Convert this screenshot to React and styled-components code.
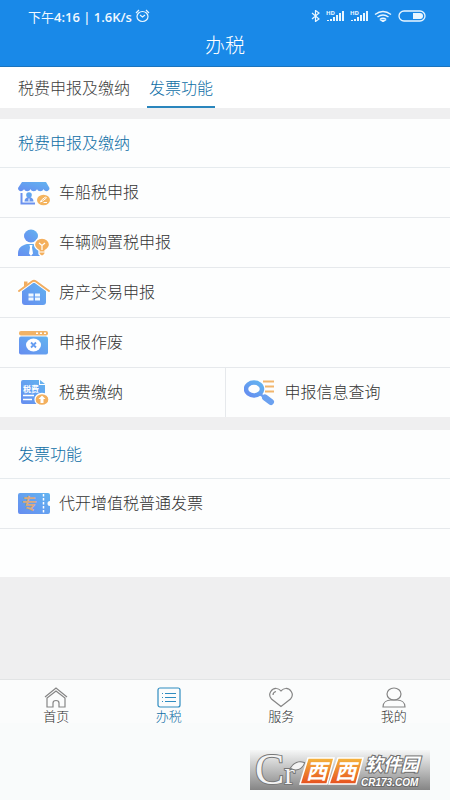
import React, { useState } from 'react';
import styled, { createGlobalStyle } from 'styled-components';

const GlobalStyle = createGlobalStyle`
  * {
    box-sizing: border-box;
  }
  body {
    margin: 0;
    background: #efeff0;
    font-family: 'Noto Sans CJK SC', sans-serif;
    font-weight: 300;
    color: #333;
  }
  button {
    font-family: inherit;
    font-weight: inherit;
    border: 0;
    background: none;
    padding: 0;
    cursor: pointer;
  }
  svg {
    display: block;
    flex-shrink: 0;
  }
`;

const Page = styled.div`
  min-height: 100vh;
  display: flex;
  flex-direction: column;
`;

const Header = styled.header`
  background: #1989e8;
  border-bottom: 1px solid #1b74bd;
  color: #fff;
`;
const StatusBar = styled.div`
  display: flex;
  justify-content: space-between;
  align-items: center;
  height: 32px;
  padding: 0 24px 0 28px;
`;
const StatusGroup = styled.div`
  display: flex;
  align-items: center;
  gap: ${props => props.$gap}px;
`;
const Clock = styled.span`
  font: 400 13px 'Noto Sans CJK SC', sans-serif;
  color: #f0f8ff;
  b {
    font-family: 'Open Sans', sans-serif;
    font-weight: 600;
  }
`;
const Title = styled.h1`
  margin: 0;
  height: 34px;
  font-size: 20px;
  line-height: 26px;
  font-weight: 300;
  text-align: center;
`;

const Tabs = styled.nav`
  display: flex;
  gap: 15px;
  padding: 0 16px;
  background: #fff;
`;
const Tab = styled.button`
  height: 41px;
  && {
    padding: 0 2px;
    border-bottom: 2px solid ${props => (props.$active ? '#2a86bd' : 'transparent')};
  }
  font-size: 16px;
  line-height: 36px;
  color: ${props => (props.$active ? '#0d6da5' : '#3c3c3c')};
`;

const Main = styled.main`
  flex: 1;
  display: flex;
  flex-direction: column;
  gap: 13px;
  padding-top: 11px;
`;
const Card = styled.section`
  padding-bottom: ${props => props.$space || 0}px;
  background: #fdfefe;
`;
const CardTitle = styled.h2`
  margin: 0;
  padding: 0 18px 1px;
  font-size: 16px;
  line-height: 47px;
  font-weight: 300;
  color: #0d6da5;
  border-bottom: 1px solid #e6ebee;
`;
const Row = styled.div`
  display: flex;
  border-bottom: ${props => (props.$last ? 0 : 1)}px solid #e6e9ec;
`;
const Item = styled.a`
  flex: 1;
  display: flex;
  align-items: center;
  gap: 9px;
  height: 49px;
  padding-left: 18px;
  font-size: 16px;
  color: #333;
  text-decoration: none;
  & + & {
    border-left: 1px solid #e6e9ec;
  }
`;
const ItemName = styled.span`
  padding-bottom: 4px;
`;

const BottomNav = styled.nav`
  display: flex;
  align-items: flex-start;
  padding-top: 7px;
  border-top: 1px solid #e2e4e5;
  background: #fbfcfc;
`;
const NavItem = styled.a`
  flex: 1;
  display: flex;
  flex-direction: column;
  align-items: center;
  font-size: 13px;
  line-height: 15px;
  color: ${props => (props.$active ? '#0d6da5' : '#2c2c2c')};
  text-decoration: none;
  svg {
    color: ${props => (props.$active ? '#2f8cc0' : '#858585')};
  }
`;
const Footer = styled.footer`
  display: flex;
  justify-content: flex-end;
  padding: 27px 20px 10px;
  background: #f9fbfb;
`;

const Gradients = () => (
  <svg width="0" height="0" style={{ position: 'absolute' }} aria-hidden="true">
    <defs>
      <linearGradient id="blue" x1="1" y1="0" x2="0" y2="1">
        <stop offset="0" stopColor="#62b4f0" />
        <stop offset="1" stopColor="#668df0" />
      </linearGradient>
    </defs>
  </svg>
);

const Icon = ({ children }) => (
  <svg width="32" height="32" viewBox="0 0 32 32" fill="none" aria-hidden="true">{children}</svg>
);

const ShopIcon = () => (
  <Icon>
    <path d="M4 5h24l3.500 6c0 4-5 4-6 1-1 3-5.500 3-6.500 0-1 3-5.500 3-6.500 0-1 3-5.500 3-6.500 0-1 3-6 3-6-1z" fill="url(#blue)" />
    <path d="M3.500 16v10.500H17" stroke="#6b91ee" strokeWidth="2" />
    <circle cx="11" cy="18" r="2.800" fill="#62a5ee" />
    <path d="M6.500 24.500c0-3 2-4.500 4.500-4.500s4.500 1.500 4.500 4.500z" fill="#6796ee" />
    <path d="M11 21.500v3" stroke="#fff" strokeWidth="1" />
    <ellipse cx="25.500" cy="23" rx="6.500" ry="5.300" fill="#f4b45f" />
    <path d="m22.500 25 1-2 4-3 1 1-4 3zM25.500 25.500H29" stroke="#fff" strokeWidth="1" />
  </Icon>
);

const PersonIcon = () => (
  <Icon>
    <ellipse cx="13" cy="9" rx="7" ry="6.500" fill="url(#blue)" />
    <path d="M0 29v-3c0-5 4-8 9-9h8c4 1 6 3 6 6v6z" fill="url(#blue)" />
    <path d="M11.500 18h3l-.5 2.500 1 6-2 2.500-2-2.500 1-6z" fill="#fff" />
    <path d="M21 27v-3.500c-2.500-1.500-4.500-3.500-4.500-6a7.500 6.500 0 0 1 15 0c0 2.500-2 4.500-4.500 6V27l-2 2h-2z" fill="#f4b05e" stroke="#fff" strokeWidth="1.300" />
    <path d="m21 16 3 2.500 3-2.500M24 18.500V23M21.500 25h5" stroke="#fff" strokeWidth="1.200" />
  </Icon>
);

const HouseIcon = () => (
  <Icon>
    <path d="M4 13 14 5.500q2-1.500 4 0L28 13v12a3 3 0 0 1-3 3H7a3 3 0 0 1-3-3z" fill="url(#blue)" />
    <path d="M1 14 14 4.500q2-1.500 4 0L31 14" stroke="#fff" strokeWidth="4" />
    <path d="M6 10V4.500h3.500V7z" fill="#f1ad60" />
    <path d="M1 14 14 4.500q2-1.500 4 0L31 14" stroke="#f1ad60" strokeWidth="2" strokeLinecap="round" />
    <path d="M10.500 16.500h5v3h-5zM17 16.500h5v3h-5zM10.500 20.500h5v3h-5zM17 20.500h5v3h-5z" fill="#f0f8ff" />
  </Icon>
);

const VoidIcon = () => (
  <Icon>
    <rect x="1" y="4" width="29" height="4.500" rx="2" fill="#f1b366" />
    <path d="M18 6.200h2M22 6.200h2M26 6.200h2" stroke="#fff" strokeWidth="1.500" />
    <rect x="1" y="9.500" width="29" height="18" rx="2" fill="url(#blue)" />
    <ellipse cx="15.500" cy="18" rx="7.500" ry="6.500" fill="#fff" />
    <path d="m13 15.500 5 5M18 15.500l-5 5" stroke="#659df0" strokeWidth="1.800" />
  </Icon>
);

const TaxIcon = () => (
  <Icon>
    <path d="M5 3h16v5h6v19H5a2 2 0 0 1-2-2V5a2 2 0 0 1 2-2z" fill="url(#blue)" />
    <path d="M22 3v4h5z" fill="#6bb2ee" />
    <text x="5" y="15" fontSize="8" fontWeight="700" fill="#fff">税费</text>
    <path d="M5 18.500h11M5 22.500h9" stroke="#fff" strokeWidth="1.300" />
    <ellipse cx="24" cy="22.500" rx="7" ry="6" fill="#f3b05e" stroke="#fff" strokeWidth="1.300" />
    <path d="m24 18.500 3.500 3.500h-2v4h-3v-4h-2z" fill="#fff" />
  </Icon>
);

const SearchIcon = () => (
  <Icon>
    <path d="M19 4.500h11M21 9.500h9M21 14.500h9" stroke="#f2b66c" strokeWidth="2" />
    <ellipse cx="10" cy="12" rx="8" ry="6.500" stroke="url(#blue)" strokeWidth="4.500" />
    <path d="m16 17 4 3" stroke="#6b9df0" strokeWidth="2.500" />
    <path d="m21 20.500 6 4.500" stroke="#6ba1f0" strokeWidth="6" strokeLinecap="round" />
  </Icon>
);

const TicketIcon = () => (
  <Icon>
    <path d="M2 5h28a2 2 0 0 1 2 2v6a2 2 0 0 0 0 5v6a2 2 0 0 1-2 2H2a2 2 0 0 1-2-2V7a2 2 0 0 1 2-2z" fill="url(#blue)" />
    <text x="4" y="21" fontSize="15" fontWeight="700" fill="#d9aa80">专</text>
    <path d="M25.500 6v19" stroke="#fff" strokeWidth="1.500" strokeDasharray="2.500 1.500" />
  </Icon>
);

const NavIcon = ({ children, d }) => (
  <svg width="24" height="21" viewBox="0 0 24 21" fill="none" stroke="currentColor" strokeWidth="1.200" aria-hidden="true">
    <path d={d} />
    {children}
  </svg>
);

const Signal = () => (
  <svg width="18" height="12" viewBox="0 0 18 12" fill="#e9f6ff" aria-hidden="true">
    <text x="0" y="5" fontSize="6" fontWeight="700" fontFamily="Open Sans">HD</text>
    <path d="M1 10h2v1H1zM4 9h2v2H4zM7 7h2v4H7zM10 5h2v6h-2zM13 3h2v8h-2zM16 1h2v10h-2z" />
  </svg>
);

const Alarm = () => (
  <svg width="15" height="14" viewBox="0 0 15 14" fill="none" stroke="#e9f6ff" strokeWidth="1.200" aria-hidden="true">
    <ellipse cx="7.500" cy="7.500" rx="5.500" ry="5" />
    <path d="m1 4 3-3M14 4l-3-3M5 6l2.500 2L10 6" />
  </svg>
);

const Brand = () => (
  <svg width="180" height="40" viewBox="0 0 180 40" overflow="visible" role="img" aria-label="西西软件园 CR173.COM">
    <defs>
      <linearGradient id="plate" x1="0" y1="0" x2="0" y2="1">
        <stop offset="0" stopColor="#f6f7f7" />
        <stop offset="1" stopColor="#858585" />
      </linearGradient>
      <linearGradient id="tile" x1="0" y1="0" x2="0" y2="1">
        <stop offset="0" stopColor="#f5b53d" />
        <stop offset="1" stopColor="#e6501f" />
      </linearGradient>
    </defs>
    <path d="M0 0h180v40H0z" fill="url(#plate)" />
    <g fill="#f4f4f4" stroke="#777" strokeWidth="2" paintOrder="stroke" fontFamily="Liberation Serif">
      <text x="5" y="34" fontSize="44">C<tspan fontSize="32">r</tspan></text>
      <path d="M41 18c3-5 8-7 13-5-2 6-8 8-13 5z" />
    </g>
    <path d="M58 8h26l-7 26H50zM88 8h25l-7 26H79z" fill="url(#tile)" stroke="#fff" strokeWidth="1.500" />
    <g fill="#fff" fontSize="21" fontWeight="700" fontStyle="italic">
      <text x="56" y="29">西</text>
      <text x="85" y="29">西</text>
    </g>
    <g fill="#fff" stroke="#6c6c6c" strokeWidth="2" paintOrder="stroke" fontWeight="700" fontStyle="italic">
      <text x="115" y="21" fontSize="18">软件园</text>
      <text x="111" y="36" fontSize="10" fontFamily="Liberation Sans">CR173.COM</text>
    </g>
  </svg>
);

const taxRows = [
  [{ name: '车船税申报', Glyph: ShopIcon }],
  [{ name: '车辆购置税申报', Glyph: PersonIcon }],
  [{ name: '房产交易申报', Glyph: HouseIcon }],
  [{ name: '申报作废', Glyph: VoidIcon }],
  [
    { name: '税费缴纳', Glyph: TaxIcon },
    { name: '申报信息查询', Glyph: SearchIcon },
  ],
];
const invoiceRows = [[{ name: '代开增值税普通发票', Glyph: TicketIcon }]];

const Section = ({ title, rows, space }) => (
  <Card $space={space}>
    <CardTitle>{title}</CardTitle>
    {rows.map((row, i) => (
      <Row key={row[0].name} $last={!space && i === rows.length - 1}>
        {row.map(({ name, Glyph }) => (
          <Item key={name} href="#">
            <Glyph />
            <ItemName>{name}</ItemName>
          </Item>
        ))}
      </Row>
    ))}
  </Card>
);

const tabs = ['税费申报及缴纳', '发票功能'];

const App = () => {
  const [tab, setTab] = useState(tabs[1]);
  return (
    <Page>
      <GlobalStyle />
      <Gradients />
      <Header>
        <StatusBar>
          <StatusGroup $gap={3}>
            <Clock>下午<b>4:16 | 1.6K/s</b></Clock>
            <Alarm />
          </StatusGroup>
          <StatusGroup $gap={6}>
            <svg width="9" height="12" viewBox="0 0 9 12" fill="none" stroke="#e9f6ff" strokeWidth="1.200" aria-hidden="true">
              <path d="m1 3 7 6-3.500 2.500V.5L8 3 1 9" />
            </svg>
            <Signal />
            <Signal />
            <svg width="18" height="12" viewBox="0 0 18 12" fill="none" stroke="#e9f6ff" strokeWidth="1.500" aria-hidden="true">
              <path d="M1 4.500q8-6 16 0M3.500 7q5.500-4 11 0M6 9.300q3-2 6 0" />
              <path d="m7.500 10.500 1.500 1 1.500-1z" />
            </svg>
            <svg width="28" height="12" viewBox="0 0 28 12" fill="none" aria-hidden="true">
              <rect x="1" y="1" width="26" height="10" rx="5" stroke="#e9f6ff" strokeWidth="1.300" />
              <path d="M15 3h7a3 3 0 0 1 0 6h-7z" fill="#e9f6ff" />
            </svg>
          </StatusGroup>
        </StatusBar>
        <Title>办税</Title>
      </Header>
      <Tabs>
        {tabs.map(name => (
          <Tab key={name} $active={tab === name} onClick={() => setTab(name)}>{name}</Tab>
        ))}
      </Tabs>
      <Main>
        <Section title="税费申报及缴纳" rows={taxRows} />
        <Section title="发票功能" rows={invoiceRows} space={48} />
      </Main>
      <BottomNav>
        <NavItem href="#">
          <NavIcon d="M1 10 12 1l11 9M3 11v9h6v-4a3 2.500 0 0 1 6 0v4h6v-9l-9-7z" />
          首页
        </NavItem>
        <NavItem href="#" $active>
          <NavIcon d="M8 6.500h11M8 10.500h11M8 14.500h11M5 6.500h1M5 10.500h1M5 14.500h1">
            <rect x="1" y="1" width="22" height="19" rx="2" />
          </NavIcon>
          办税
        </NavItem>
        <NavItem href="#">
          <NavIcon d="M12 19.500 2.500 12C-2 7 3 1 7.500 1.500 10 1.700 11 3 12 4c1-1 2-2.300 4.500-2.500C21 1 26 7 21.500 12zM4 8c0-2 1-3 3-3.500" />
          服务
        </NavItem>
        <NavItem href="#">
          <NavIcon d="M1 20c0-5 4-7 8-7h6c4 0 8 2 8 7z">
            <ellipse cx="12" cy="7" rx="7" ry="6" />
          </NavIcon>
          我的
        </NavItem>
      </BottomNav>
      <Footer><Brand /></Footer>
    </Page>
  );
};

export default App;
